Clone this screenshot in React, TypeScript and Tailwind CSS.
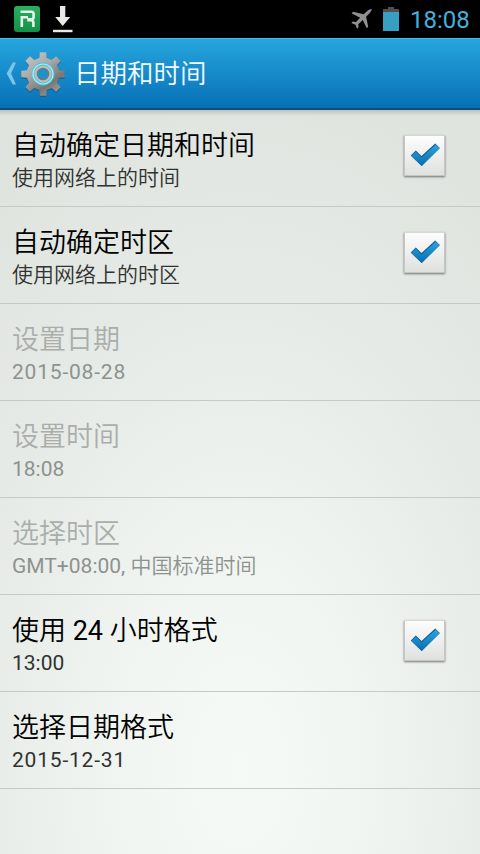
import { type FC } from 'react';

interface Setting {
  title: string;
  summary: string;
  disabled?: boolean;
  checked?: boolean;
  latin?: boolean;
}

const settings: Setting[] = [
  { title: '自动确定日期和时间', summary: '使用网络上的时间', checked: true },
  { title: '自动确定时区', summary: '使用网络上的时区', checked: true },
  { title: '设置日期', summary: '2015-08-28', disabled: true, latin: true },
  { title: '设置时间', summary: '18:08', disabled: true },
  { title: '选择时区', summary: 'GMT+08:00, 中国标准时间', disabled: true },
  { title: '使用 24 小时格式', summary: '13:00', checked: true },
  { title: '选择日期格式', summary: '2015-12-31', latin: true },
];

// 8 teeth, starting at the top
const gearPath = (() => {
  const pts: string[] = [];
  for (let i = 0; i < 8; i++) {
    const base = i * 45 - 90;
    const corners: [number, number][] = [
      [-13, 16.5],
      [-8.5, 22],
      [8.5, 22],
      [13, 16.5],
    ];
    for (const [deg, r] of corners) {
      const a = ((base + deg) * Math.PI) / 180;
      pts.push(`${(24 + r * Math.cos(a)).toFixed(2)} ${(24 + r * Math.sin(a)).toFixed(2)}`);
    }
  }
  return `M${pts.join('L')}Z`;
})();

// Chinese runs are demilight, latin runs regular
const Label: FC<{ text: string }> = ({ text }) => (
  <>
    {text.split(/([\x20-\x7e]+)/).map((part, i) =>
      i % 2 ? <span key={i} className="font-normal">{part}</span> : part,
    )}
  </>
);

const GearIcon: FC = () => (
  <svg width="48" height="48" viewBox="0 0 48 48" className="shrink-0">
    <defs>
      <linearGradient id="metal" x1="0.1" y1="0" x2="0.8" y2="1">
        <stop offset="0" stopColor="#c6c8c7" />
        <stop offset="0.4" stopColor="#a9aaa9" />
        <stop offset="0.75" stopColor="#777776" />
        <stop offset="1" stopColor="#a5a5a3" />
      </linearGradient>
    </defs>
    <path d={gearPath} transform="translate(0 1.2)" fill="#164b6e" opacity="0.6" />
    <path d={gearPath} fill="url(#metal)" />
    <circle cx="24" cy="24" r="10" fill="#bcbebd" stroke="#4fc0dc" strokeWidth="2.8" />
    <circle cx="24" cy="24" r="10" fill="none" stroke="#a9f0f8" strokeWidth="1.2" />
    <circle cx="24" cy="24" r="5.6" fill="#1a93cf" stroke="#73797c" strokeWidth="1.4" />
  </svg>
);

const CheckBox: FC = () => (
  <div className="mb-[5px] flex size-[41px] shrink-0 items-center justify-center border border-[#c3c6c3] border-t-[#d5d8d5] bg-linear-to-b from-[#fdfdfd] to-[#dfe1df] shadow-[0_1px_2px_rgba(0,0,0,0.5)]">
    <svg width="31" height="25" viewBox="0 0 31 25" className="ml-0.5">
      <defs>
        <linearGradient id="tick" x1="0" y1="0" x2="0" y2="1">
          <stop offset="0" stopColor="#2aa5e0" />
          <stop offset="1" stopColor="#0a6cab" />
        </linearGradient>
      </defs>
      <path d="M0.8 12.5L5.8 7.6L11.5 13L25.2 0.6L29.8 5L11.7 23Z" fill="#0e5f96" />
      <path d="M1.2 13.1L5.8 8.8L11.6 14.4L25.6 1.8L29.8 5.2L11.7 23Z" fill="url(#tick)" />
    </svg>
  </div>
);

const StatusBar: FC = () => (
  <div className="flex h-[38px] items-center bg-black pl-3.5 pr-[9px]">
    <svg width="26" height="26" viewBox="0 0 26 26">
      <defs>
        <linearGradient id="green" x1="0" y1="0" x2="0" y2="1">
          <stop offset="0" stopColor="#2aae61" />
          <stop offset="1" stopColor="#159047" />
        </linearGradient>
      </defs>
      <rect width="26" height="26" rx="3" fill="url(#green)" />
      <path d="M6.5 5.8H17.5Q19.6 5.8 19.6 8V11Q19.6 13.2 17.5 13.2H13.2M7.8 21V11.2H14M13.2 14.2H17Q19.4 14.2 19.4 16.8V21" fill="none" stroke="#e6f1e9" strokeWidth="2.6" />
    </svg>
    <svg width="20" height="27" viewBox="0 0 20 27" className="ml-[13px]">
      <path d="M7 0H12.3V11H17.2L9.7 20L2.2 11H7Z" fill="#e9e9e6" />
      <path d="M0 23.8H19.5V26.2H0Z" fill="#e9e9e6" />
    </svg>
    <svg width="21" height="20" viewBox="0 0 21 20" className="ml-auto">
      <path
        d="M20.6 0.3Q18.8-.2 16.8 1.5L12.7 5.2L2.2 2.7L0.6 4.2L9.1 8.7L5 13.1L1.8 12.6L0.4 14L4.4 15.8L6.2 19.7L7.6 18.3L7.3 15.3L11.8 11.1L15.7 19.3L17.2 17.8L15.1 7.7L18.9 3.8Q20.8 1.8 20.6 0.3Z"
        fill="#909090"
      />
    </svg>
    <svg width="16" height="24" viewBox="0 0 16 24" className="ml-[11px]">
      <path d="M5 0H11V2H16V6H0V2H5Z" fill="#505050" />
      <path d="M0 5H16V24H0Z" fill="#369fc2" />
    </svg>
    <span className="ml-[11px] w-[61px] whitespace-nowrap pt-0.5 text-[24px] leading-[36px] text-[#42b2dd]">18:08</span>
  </div>
);

const Header: FC = () => (
  <header className="flex h-[72px] items-center border-b-2 border-t border-b-[#104d7a] border-t-[#4dbbe8] bg-[linear-gradient(#26a5dd,#0770b6)] pl-[6px]">
    <svg width="11" height="23" viewBox="0 0 11 23">
      <path d="M6.8 0.5H10L5.1 11.5L10 22.5H6.8L0.6 11.5Z" fill="#7bc5e9" />
    </svg>
    <div className="ml-0.5">
      <GearIcon />
    </div>
    <h1 className="ml-[7px] text-[26.5px] leading-[70px] font-[350] text-[#f4fbff]">日期和时间</h1>
  </header>
);

const App: FC = () => (
  <div
    className="flex h-[854px] w-[480px] flex-col overflow-hidden bg-[radial-gradient(ellipse_420px_700px_at_50%_90%,#f6faf7_0%,#f0f5f1_30%,#e6ebe7_65%,#dfe4df_100%)] font-['Roboto','Noto_Sans_CJK_SC',sans-serif]"
  >
    <StatusBar />
    <Header />
    <main className="flex flex-col bg-[linear-gradient(rgba(0,0,0,0.15),transparent_6px)]">
      {settings.map((s) => (
        <div key={s.title} className="flex h-[97px] items-center justify-between border-b border-[#c5cac6] pl-3 pr-[35px]">
          <div className={`pt-1 font-[350] ${s.disabled ? 'text-[#aaaeab]' : 'text-black'}`}>
            <div className="whitespace-nowrap text-[27px] leading-9">
              <Label text={s.title} />
            </div>
            <div
              className={`whitespace-nowrap text-[21px] leading-[29px] ${s.disabled ? 'text-[#8e928f]' : 'text-[#303330]'} ${s.latin ? 'tracking-[0.8px]' : ''}`}
            >
              <Label text={s.summary} />
            </div>
          </div>
          {s.checked && <CheckBox />}
        </div>
      ))}
    </main>
  </div>
);

export default App;
